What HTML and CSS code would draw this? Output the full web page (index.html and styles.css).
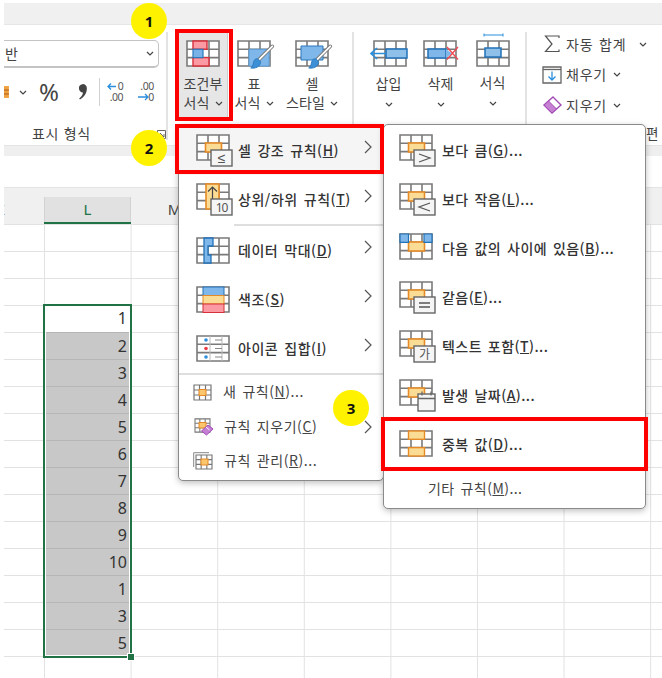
FILE: index.html
```html
<!DOCTYPE html>
<html lang="ko">
<head>
<meta charset="utf-8">
<title>조건부 서식</title>
<link rel="stylesheet" href="styles.css">
</head>
<body>
<svg class="defs" width="0" height="0" aria-hidden="true">
  <defs>
    <symbol id="grid" viewBox="0 0 34 27">
      <path d="M1 1H33V26H1ZM1 9.3H33M1 17.6H33M12 1V26M23 1V26" fill="#fff" stroke="#7a7a7a" stroke-width="1.6"/>
    </symbol>
    <symbol id="chev-d" viewBox="0 0 8 5"><path d="M1 1l3 3 3-3" fill="none" stroke="#444" stroke-width="1.2"/></symbol>
    <symbol id="chev-r" viewBox="0 0 8 14"><path d="M1 1l6 6-6 6" fill="none" stroke="#555" stroke-width="1.2"/></symbol>
    <symbol id="cell-mid" viewBox="0 0 37 32">
      <use href="#grid" width="34" height="27"/>
      <rect x="9.5" y="9" width="16" height="9" fill="#fbdc95" stroke="#e58a26" stroke-width="1.6"/>
    </symbol>
    <symbol id="brush" viewBox="0 0 30 30">
      <path d="M27 2L12 17" stroke="#777" stroke-width="4" stroke-linecap="round"/>
      <path d="M27 2L12 17" stroke="#fff" stroke-width="2" stroke-linecap="round"/>
      <path d="M3 26c5 1 10-1 11-6 0-2-3-5-5-4-4 1-2 8-6 10z" fill="#3d8fd6" stroke="#2a78bd"/>
    </symbol>
    <symbol id="mini" viewBox="0 0 19 17">
      <path d="M1 1H18V16H1ZM1 6H18M1 11H18M6.500 1V16M12.500 1V16" fill="#fff" stroke="#777" stroke-width="1.2"/>
    </symbol>
  </defs>
</svg>

<main class="stage">
  <div class="topband"></div>

  <section class="ribbon">
    <div class="group number">
      <div class="select"><span>반</span><svg class="chev" width="8" height="5"><use href="#chev-d"/></svg></div>
      <div class="numrow">
        <svg class="acct" width="6" height="14" viewBox="0 0 6 14"><rect y="1" width="5" height="12" fill="#f0a040"/><path d="M0 5h5M0 9h5" stroke="#a85f16"/></svg>
        <svg class="chev acct-chev" width="8" height="5"><use href="#chev-d"/></svg>
        <span class="pct">%</span>
        <svg class="comma" width="10" height="16" viewBox="0 0 10 16"><path d="M4.500 0a4.200 4.200 0 0 1 4.500 4.500c0 5-3 9-7 11l-.8-1c2.500-2 3.800-4.200 3.800-6a4 4 0 0 1-4-4.200A4 4 0 0 1 4.500 0z" fill="#444"/></svg>
        <i class="vline"></i>
        <div class="dec">
          <span class="dec-top right">0</span>
          <span class="dec-bot">.00</span>
          <svg class="dec-arrow" width="22" height="22" viewBox="0 0 22 22"><path d="M9 5.500H1M4 2.500L1 5.500l3 3" fill="none" stroke="#2b8fdc" stroke-width="1.300"/></svg>
        </div>
        <div class="dec">
          <span class="dec-top">.00</span>
          <span class="dec-bot right">0</span>
          <svg class="dec-arrow" width="22" height="22" viewBox="0 0 22 22"><path d="M1 16H11M8 13l3 3-3 3" fill="none" stroke="#2b8fdc" stroke-width="1.300"/></svg>
        </div>
      </div>
      <div class="grouplabel">표시 형식</div>
      <svg class="launcher" width="9" height="9" viewBox="0 0 9 9"><path d="M.5 8.500V.5H8.500V8.500ZM3 3l4 4M4 7h3V4" fill="none" stroke="#666"/></svg>
    </div>

    <div class="group styles">
      <div class="rbtn active">
        <svg class="ricon" width="34" height="27" viewBox="0 0 34 27">
          <use href="#grid" width="34" height="27"/>
          <path d="M7 1H21V9.300H7ZM7 17.600H23V26H7Z" fill="#fb9aa3" stroke="#d6303a" stroke-width="1.400"/>
          <rect x="7" y="9.300" width="10" height="8.300" fill="#79b2e6" stroke="#2a78bd" stroke-width="1.200"/>
        </svg>
        <span>조건부</span>
        <span>서식<svg class="chev inline" width="8" height="5"><use href="#chev-d"/></svg></span>
      </div>
      <div class="rbtn brushed">
        <svg class="ricon" width="38" height="33" viewBox="0 0 38 33">
          <use href="#grid" width="34" height="27"/>
          <path d="M12 9.300H32V26H12Z" fill="#7fb7ea" stroke="#5a9fdd"/>
          <use href="#brush" x="11" y="3" width="27" height="30"/>
        </svg>
        <span>표</span>
        <span>서식<svg class="chev inline" width="8" height="5"><use href="#chev-d"/></svg></span>
      </div>
      <div class="rbtn wide brushed">
        <svg class="ricon" width="38" height="33" viewBox="0 0 38 33">
          <use href="#grid" width="34" height="27"/>
          <path d="M6 6H28V20H6Z" fill="#7fb7ea" stroke="#2a78bd"/>
          <use href="#brush" x="11" y="3" width="27" height="30"/>
        </svg>
        <span>셀</span>
        <span>스타일<svg class="chev inline" width="8" height="5"><use href="#chev-d"/></svg></span>
      </div>
    </div>

    <div class="group cells">
      <div class="rbtn col">
        <svg class="ricon" width="38" height="27" viewBox="0 0 38 27">
          <use href="#grid" x="3" width="34" height="27"/>
          <rect x="16" y="9" width="21" height="9" fill="#8fc0ea" stroke="#2272b8" stroke-width="1.500"/>
          <path d="M16 13.500H2M7 8l-6 5.500L7 19" fill="none" stroke="#2b8fdc" stroke-width="1.600"/>
        </svg>
        <span>삽입</span>
        <svg class="chev under" width="8" height="5"><use href="#chev-d"/></svg>
      </div>
      <div class="rbtn col">
        <svg class="ricon" width="36" height="27" viewBox="0 0 36 27">
          <use href="#grid" width="34" height="27"/>
          <rect x="5" y="9" width="18" height="9" fill="#7fb7ea" stroke="#2272b8" stroke-width="1.500"/>
          <path d="M23 9l6 4.500-6 4.500z" fill="#7fb7ea"/>
          <path d="M24 7l11 12.500M35 7L24 19.500" stroke="#f0474f" stroke-width="1.300"/>
        </svg>
        <span>삭제</span>
        <svg class="chev under" width="8" height="5"><use href="#chev-d"/></svg>
      </div>
      <div class="rbtn col raised">
        <svg class="ricon" width="34" height="34" viewBox="0 0 34 34">
          <path d="M8 2H27M8 .5v3M27 .5v3" stroke="#2b8fdc" fill="none"/>
          <use href="#grid" y="7" width="34" height="27"/>
          <rect x="9" y="15" width="16" height="9" fill="#8fc0ea" stroke="#2272b8" stroke-width="1.500"/>
        </svg>
        <span>서식</span>
        <svg class="chev under" width="8" height="5"><use href="#chev-d"/></svg>
      </div>
    </div>

    <div class="group edit">
      <div class="editrow">
        <svg class="eicon" width="20" height="18" viewBox="0 0 20 18"><path d="M17 3V1H3.500L10 9l-6.500 7.500H17v-2" fill="none" stroke="#555" stroke-width="1.200"/></svg>
        <span>자동 합계</span>
        <svg class="chev far" width="8" height="5"><use href="#chev-d"/></svg>
      </div>
      <div class="editrow">
        <svg class="eicon" width="20" height="18" viewBox="0 0 20 18"><path d="M1 1H19V17H1Z" fill="#fff" stroke="#666" stroke-width="1.300"/><path d="M1 3.500H19" stroke="#666" stroke-width="1.300"/><path d="M10 5.500V14M6.500 10.500L10 14l3.500-3.500" fill="none" stroke="#2b8fdc" stroke-width="1.300"/></svg>
        <span>채우기</span>
        <svg class="chev" width="8" height="5"><use href="#chev-d"/></svg>
      </div>
      <div class="editrow">
        <svg class="eicon" width="20" height="18" viewBox="0 0 20 18"><path d="M11 1l8 8-9 8-8-8z" fill="#fff" stroke="#a24bb5" stroke-width="1.400"/><path d="M6.500 5l8 8-4.500 4-8-8z" fill="#c57fd3" stroke="#a24bb5"/></svg>
        <span>지우기</span>
        <svg class="chev" width="8" height="5"><use href="#chev-d"/></svg>
      </div>
      <div class="edit-label">편집</div>
    </div>
  </section>

  <div class="ribbon-shade"></div>
  <div class="formula"></div>

  <div class="colheads">
    <span class="ch k">K</span>
    <span class="ch l">L</span>
    <span class="ch m">M</span>
  </div>

  <div class="sheet">
    <div class="selection">
      <div class="cell">1</div>
      <div class="cell dup">2</div>
      <div class="cell dup">3</div>
      <div class="cell dup">4</div>
      <div class="cell dup">5</div>
      <div class="cell dup">6</div>
      <div class="cell dup">7</div>
      <div class="cell dup">8</div>
      <div class="cell dup">9</div>
      <div class="cell dup">10</div>
      <div class="cell dup">1</div>
      <div class="cell dup">3</div>
      <div class="cell dup">5</div>
      <i class="handle"></i>
    </div>
  </div>

  <nav class="menu main-menu">
    <div class="item">
      <svg class="ic" width="37" height="33" viewBox="0 0 37 33"><use href="#cell-mid" width="37" height="32"/><rect x="15" y="16" width="21" height="16" fill="#f5f5f5" stroke="#666" stroke-width="1.400"/><text x="25.500" y="29" class="ictext">≤</text></svg>
      <span class="label">셀 강조 규칙(<u>H</u>)</span>
      <svg class="arrow" width="8" height="14"><use href="#chev-r"/></svg>
    </div>
    <div class="item">
      <svg class="ic" width="37" height="33" viewBox="0 0 37 33"><use href="#grid" width="34" height="27"/><rect x="10" y="1" width="13" height="25" fill="#fbdc95" stroke="#e58a26" stroke-width="1.600"/><path d="M16.500 16V4M12 8.500L16.500 4 21 8.500" fill="none" stroke="#444" stroke-width="1.200"/><rect x="15" y="16" width="21" height="16" fill="#f5f5f5" stroke="#666" stroke-width="1.400"/><text x="25.500" y="29" class="ictext small">10</text></svg>
      <span class="label">상위/하위 규칙(<u>T</u>)</span>
      <svg class="arrow" width="8" height="14"><use href="#chev-r"/></svg>
    </div>
    <div class="rule short"></div>
    <div class="item">
      <svg class="ic" width="37" height="33" viewBox="0 0 37 33"><use href="#grid" y="3" width="34" height="27"/><path d="M8 4H17V12H12V21H15V29H8Z" fill="#7fb7ea" stroke="#2272b8" stroke-width="1.300"/></svg>
      <span class="label">데이터 막대(<u>D</u>)</span>
      <svg class="arrow" width="8" height="14"><use href="#chev-r"/></svg>
    </div>
    <div class="item">
      <svg class="ic" width="37" height="33" viewBox="0 0 37 33"><use href="#grid" y="3" width="34" height="27"/><rect x="7" y="4" width="21" height="8.500" fill="#7fb7ea" stroke="#2272b8"/><rect x="7" y="12.500" width="21" height="8.500" fill="#fbdc95" stroke="#e58a26"/><rect x="7" y="21" width="21" height="8.500" fill="#fb9aa3" stroke="#d6303a"/></svg>
      <span class="label">색조(<u>S</u>)</span>
      <svg class="arrow" width="8" height="14"><use href="#chev-r"/></svg>
    </div>
    <div class="item">
      <svg class="ic" width="37" height="33" viewBox="0 0 37 33"><path d="M1 4H33V29H1ZM1 12.300H33M1 20.600H33" fill="#fff" stroke="#7a7a7a" stroke-width="1.600"/><path d="M14 4V29M26 4V29" stroke="#bbb"/><circle cx="10" cy="8" r="1.800" fill="#2b8fdc"/><circle cx="10" cy="16.500" r="1.800" fill="#ea3c46"/><circle cx="10" cy="25" r="1.800" fill="#2b8fdc"/><path d="M19 8h7M19 16.500h7M19 25h7" stroke="#888" stroke-width="1.200"/></svg>
      <span class="label">아이콘 집합(<u>I</u>)</span>
      <svg class="arrow" width="8" height="14"><use href="#chev-r"/></svg>
    </div>
    <div class="rule"></div>
    <div class="item mini-item">
      <svg class="ic-s" width="19" height="17" viewBox="0 0 19 17"><use href="#mini" width="19" height="17"/><rect x="6" y="5.500" width="7" height="6" fill="#fbc66d" stroke="#e58a26"/></svg>
      <span class="label plain">새 규칙(<u>N</u>)...</span>
    </div>
    <div class="item mini-item">
      <svg class="ic-s" width="20" height="18" viewBox="0 0 20 18"><use href="#mini" width="19" height="15"/><rect x="6" y="4.500" width="7" height="5.500" fill="#fbc66d" stroke="#e58a26"/><path d="M15 7l5 4-6.500 6L8.500 13z" fill="#c57fd3" stroke="#a24bb5"/><path d="M13 9l3.500 3" stroke="#fff"/></svg>
      <span class="label plain">규칙 지우기(<u>C</u>)</span>
      <svg class="arrow" width="8" height="14"><use href="#chev-r"/></svg>
    </div>
    <div class="item mini-item">
      <svg class="ic-s" width="20" height="18" viewBox="0 0 20 18"><path d="M.7 15V.7H16" fill="none" stroke="#888"/><use href="#mini" x="2" y="2" width="18" height="16"/><rect x="8" y="7" width="7" height="6" fill="#fbc66d" stroke="#e58a26"/></svg>
      <span class="label plain">규칙 관리(<u>R</u>)...</span>
    </div>
  </nav>

  <nav class="menu sub-menu">
    <div class="item">
      <svg class="ic" width="37" height="33" viewBox="0 0 37 33"><use href="#cell-mid" width="37" height="32"/><rect x="15" y="16" width="21" height="16" fill="#f5f5f5" stroke="#666" stroke-width="1.400"/><path d="M20 20l11 4-11 4" fill="none" stroke="#555" stroke-width="1.200"/></svg>
      <span class="label">보다 큼(<u>G</u>)...</span>
    </div>
    <div class="item">
      <svg class="ic" width="37" height="33" viewBox="0 0 37 33"><use href="#cell-mid" width="37" height="32"/><rect x="15" y="16" width="21" height="16" fill="#f5f5f5" stroke="#666" stroke-width="1.400"/><path d="M31 20l-11 4 11 4" fill="none" stroke="#555" stroke-width="1.200"/></svg>
      <span class="label">보다 작음(<u>L</u>)...</span>
    </div>
    <div class="item">
      <svg class="ic" width="37" height="33" viewBox="0 0 37 33"><use href="#cell-mid" y="1" width="37" height="32"/><path d="M1 2H9.500V10.300H1ZM25 2H33V10.300H25Z" fill="#7fb7ea" stroke="#2272b8" stroke-width="1.200"/></svg>
      <span class="label">다음 값의 사이에 있음(<u>B</u>)...</span>
    </div>
    <div class="item">
      <svg class="ic" width="37" height="33" viewBox="0 0 37 33"><use href="#cell-mid" width="37" height="32"/><rect x="15" y="16" width="21" height="16" fill="#f5f5f5" stroke="#666" stroke-width="1.400"/><path d="M20 22h11M20 26h11" stroke="#555" stroke-width="1.300"/></svg>
      <span class="label">같음(<u>E</u>)...</span>
    </div>
    <div class="item">
      <svg class="ic" width="37" height="33" viewBox="0 0 37 33"><use href="#cell-mid" width="37" height="32"/><rect x="15" y="16" width="21" height="16" fill="#f5f5f5" stroke="#666" stroke-width="1.400"/><text x="25.500" y="29" class="ictext kr">가</text></svg>
      <span class="label">텍스트 포함(<u>T</u>)...</span>
    </div>
    <div class="item">
      <svg class="ic" width="37" height="33" viewBox="0 0 37 33"><use href="#cell-mid" width="37" height="32"/><rect x="19" y="15" width="17" height="17" fill="#f5f5f5" stroke="#666" stroke-width="1.400"/><path d="M19 19.500H36M23 12.500v4M32 12.500v4" stroke="#666" stroke-width="1.300"/></svg>
      <span class="label">발생 날짜(<u>A</u>)...</span>
    </div>
    <div class="item">
      <svg class="ic" width="37" height="33" viewBox="0 0 37 33"><use href="#grid" y="2" width="34" height="27"/><rect x="9.500" y="3" width="16" height="8.300" fill="#fbdc95" stroke="#e58a26" stroke-width="1.400"/><rect x="9.500" y="19.600" width="16" height="8.400" fill="#fbdc95" stroke="#e58a26" stroke-width="1.400"/></svg>
      <span class="label">중복 값(<u>D</u>)...</span>
    </div>
    <div class="item more">
      <span class="label plain">기타 규칙(<u>M</u>)...</span>
    </div>
  </nav>

  <div class="redbox box-button"></div>
  <div class="redbox box-item"></div>
  <div class="redbox box-dup"></div>

  <div class="badge b1">1</div>
  <div class="badge b2">2</div>
  <div class="badge b3">3</div>
</main>
</body>
</html>
```

FILE: styles.css
```css
* { box-sizing: border-box; }
html, body { margin: 0; padding: 0; background: #fff; }
body {
  font-family: "Noto Sans CJK KR", "Noto Sans", sans-serif;
  color: #444;
  overflow: hidden;
}
.defs { position: absolute; }
.stage {
  position: relative;
  width: 662px;
  height: 678px;
  padding: 3px 0 0 4px;
  overflow: hidden;
  display: flex;
  flex-direction: column;
}
.topband { height: 22px; background: #f0f0f0; border-bottom: 1px solid #e6e6e6; flex: none; }

/* Ribbon */
.ribbon { display: flex; height: 120px; flex: none; background: #fff; overflow: hidden; font-size: 14px; line-height: 19px; }
.group { position: relative; flex: none; margin: 7px 0 5px; border-right: 2px solid #e3e3e3; }
.number { width: 164px; overflow: hidden; margin-bottom: 0; border-right: 0; }
.number::after { content: ""; position: absolute; right: 0; top: 0; width: 2px; height: 108px; background: #e3e3e3; }
.styles { width: 186px; padding-left: 10px; display: flex; }
.cells { width: 173px; padding-left: 9px; display: flex; }
.edit { width: 135px; border: 0; padding: 0 0 0 15px; margin-top: 0; overflow: visible; }
.edit::before { content: ""; display: block; height: 4px; }

.select {
  display: flex; align-items: center; justify-content: space-between;
  width: 175px; height: 28px; margin: 8px 0 0 -20px; padding: 0 4px 0 20px;
  border: 1px solid #c4c4c4; border-bottom-width: 2px; border-radius: 5px; font-size: 14px;
}
.chev { flex: none; display: block; }
.numrow { display: flex; align-items: center; height: 30px; margin-top: 9px; position: relative; }
.acct { margin-right: 9px; }
.acct-chev { margin-right: 12px; }
.pct { font: 24px/30px "Noto Sans", sans-serif; width: 19px; margin-right: 20px; letter-spacing: -1px; }
.comma { margin-right: 11px; }
.vline { width: 1px; height: 28px; background: #d0d0d0; margin-right: 7px; }
.dec { position: relative; display: flex; flex-direction: column; width: 22px; height: 22px; margin-right: 9px; font: 10.500px/11px "Noto Sans", sans-serif; color: #555; letter-spacing: -.5px; }
.dec-top, .dec-bot { display: block; height: 11px; padding-left: 3px; }
.dec .right { padding-left: 11px; }
.dec-arrow { position: absolute; left: 0; top: 0; }
.grouplabel { position: absolute; left: 28px; top: 92px; font-size: 14px; line-height: 19px; letter-spacing: .7px; }
.launcher { position: absolute; left: 153px; top: 98px; }

.rbtn { display: flex; flex-direction: column; align-items: center; width: 50px; padding-top: 8px; height: 88px; margin-right: 1px; white-space: nowrap; letter-spacing: .2px; }
.rbtn.active { background: #e6e6e6; border: 1px solid #cfcfcf; padding-top: 7px; margin-right: 1px; }
.rbtn.wide { width: 60px; margin-left: 2px; }
.rbtn.col { width: 51px; margin-right: 1px; }
.ricon { display: block; flex: none; }
.rbtn .ricon { margin-bottom: 7px; }
.rbtn.brushed .ricon { margin-left: 4px; margin-bottom: 1px; }
.rbtn.raised { padding-top: 1px; }
.rbtn.raised .ricon { margin-bottom: 6px; }
.inline { display: inline-block; margin-left: 5px; vertical-align: 2px; }
.under { margin-top: 9px; }

.editrow { display: flex; align-items: center; height: 30.500px; font-size: 14px; letter-spacing: .8px; word-spacing: 1px; }
.eicon { margin-right: 4px; flex: none; }
.editrow .chev { margin-left: 6px; }
.editrow .chev.far { margin-left: 13px; }
.edit-label { position: absolute; left: 119px; top: 99px; font-size: 13.500px; line-height: 18px; }

.ribbon-shade { height: 11px; background: #efefef; flex: none; border-top: 1px solid #e4e4e4; }
.formula { height: 32px; flex: none; background: #fff; border-bottom: 1px solid #e4e4e4; }

/* Sheet */
.colheads { position: relative; display: flex; height: 36px; flex: none; background: #f0f0f0; padding: 9px 0 0 40px; overflow: hidden; }
.ch { display: block; font: 15px/25px "Noto Sans", sans-serif; color: #444; text-align: center; }
.k { position: absolute; left: -9px; top: 9px; width: 10px; }
.l { width: 87px; height: 27px; background: #e1e1e1; border-bottom: 2px solid #217346; color: #217346; box-shadow: inset 1px 0 #d2d2d2, inset -1px 0 #d2d2d2; }
.m { width: 87px; }

.sheet {
  flex: 1;
  padding: 80px 0 0 39px;
  background-image:
    linear-gradient(#e2e2e2 1px, transparent 1px),
    linear-gradient(90deg, #e2e2e2 1px, transparent 1px);
  background-size: 100% 27px, 86.600px 100%;
  background-position: 0 0, 40px 0;
}
.selection {
  position: relative;
  width: 89px;
  padding: 0 1px 1px;
  border: 2px solid #217346;
  background: #fff;
}
.cell {
  height: 27px;
  padding: 1px 2px 0 0;
  font: 16px/25px "Noto Sans", sans-serif;
  text-align: right;
  color: #333;
}
.cell:first-child { height: 26px; padding-top: 0; }
.cell:nth-last-child(2) { height: 26px; }
.cell.dup { background: #c8c8c8; border-top: 1px solid #b6b6b6; }
.handle { position: absolute; right: -4px; bottom: -4px; width: 6px; height: 6px; background: #217346; outline: 1px solid #fff; }

/* Menus */
.menu {
  position: absolute;
  top: 124px;
  background: #fff;
  border: 1px solid #8a8a8a;
  border-radius: 5px;
  box-shadow: 0 2px 6px rgba(0, 0, 0, .25);
  padding-top: 1px;
  font-size: 14px;
  color: #333;
}
.main-menu { left: 178px; width: 206px; height: 357px; }
.sub-menu { left: 383px; width: 263px; height: 385px; }
.item { position: relative; display: flex; align-items: center; height: 49px; padding-left: 17px; white-space: nowrap; }
.main-menu .item:first-child { background: #f5f5f5; }
.main-menu .ic { margin-right: 5px; }
.sub-menu .item { padding-left: 15px; }
.ic { flex: none; margin-right: 6px; display: block; }
.ic-s { flex: none; margin-right: 11px; margin-left: -3px; display: block; }
.label { font-weight: 500; letter-spacing: .45px; word-spacing: 1.500px; margin-top: -2px; }
.main-menu .label { letter-spacing: .55px; }
.label.plain { font-weight: 400; color: #444; }
.arrow { position: absolute; right: 11px; top: 14px; }
.rule { height: 2px; background: #dedede; }
.rule.short { margin-left: 55px; }
.mini-item { height: 34.500px; }
.mini-item .arrow { top: 10px; }
.item.more { height: 39px; padding-left: 44px; }
.ictext { font: 14px "Noto Sans", sans-serif; fill: #555; text-anchor: middle; }
.ictext.small { font-size: 12px; letter-spacing: -1px; }
.ictext.kr { font: 12px "Noto Sans CJK KR", sans-serif; }

/* Annotations */
.redbox { position: absolute; border: 4px solid #f00; pointer-events: none; }
.box-button { left: 175px; top: 29px; width: 58px; height: 92px; }
.box-item { left: 175px; top: 124px; width: 209px; height: 50px; }
.box-dup { left: 381px; top: 417px; width: 267px; height: 54px; }

.badge {
  position: absolute;
  width: 36px; height: 36px;
  border-radius: 50%;
  background: #fef200;
  color: #111;
  font: 700 15px/36px "Noto Sans", sans-serif;
  text-align: center;
}
.b1 { left: 131px; top: 3px; }
.b2 { left: 131px; top: 130px; }
.b3 { left: 333px; top: 390px; }
```
